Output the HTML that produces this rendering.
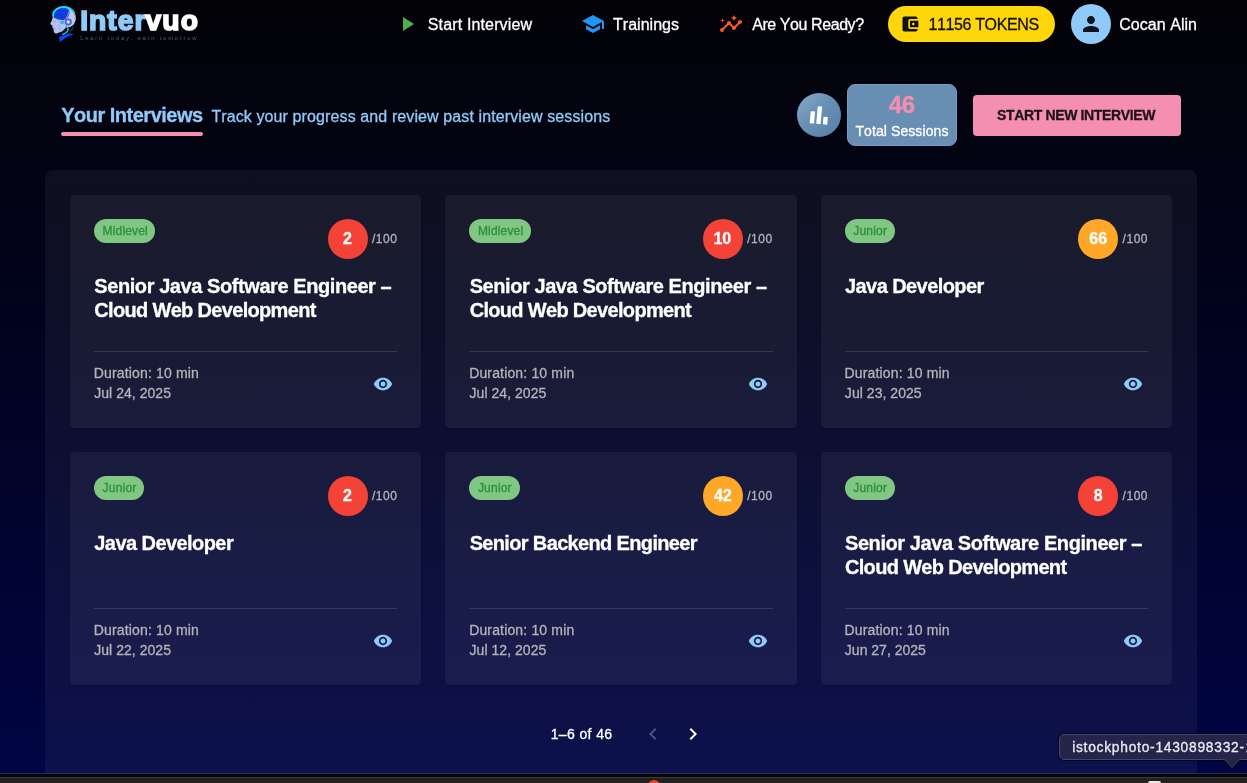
<!DOCTYPE html>
<html lang="en">
<head>
<meta charset="utf-8">
<title>Intervuo – Your Interviews</title>
<style>
*{box-sizing:border-box;margin:0;padding:0}
html,body{width:1247px;height:783px;overflow:hidden}
body{position:relative;font-family:"Liberation Sans",sans-serif;background:linear-gradient(180deg,#020206 0%,#02030c 10%,#010324 52%,#010544 100%);color:#fff}
.t{position:absolute;white-space:nowrap;line-height:1;display:block;font-kerning:none}
.abs{position:absolute}
.txt{position:absolute;left:0;top:0;width:1247px;height:783px;will-change:transform}
.panel{position:absolute;left:45px;top:170px;width:1152px;height:640px;border-radius:8px;background:rgba(255,255,255,0.05)}
.card{position:absolute;height:233px;border-radius:4px;background:rgba(255,255,255,0.05);box-shadow:0 1px 2px rgba(0,0,0,0.25)}
.chip{position:absolute;height:24px;border-radius:12px;background:#81c784}
.score{position:absolute;width:40px;height:40px;border-radius:50%}
.hr{position:absolute;height:1px;background:rgba(255,255,255,0.13)}
.eye{position:absolute}
.pill{position:absolute;left:888px;top:6px;width:167px;height:36px;border-radius:18px;background:#ffd60a}
.avatar{position:absolute;left:1071px;top:4px;width:40px;height:40px;border-radius:50%;background:#90caf9}
.uline{position:absolute;left:61px;top:132px;width:142px;height:4px;border-radius:2px;background:#f48fb1}
.statc{position:absolute;left:797px;top:93px;width:44px;height:44px;border-radius:50%;background:linear-gradient(135deg,#8aaac8 0%,#6890b5 45%,#5780a8 100%)}
.statb{position:absolute;left:847px;top:84px;width:110px;height:62px;border-radius:8px;background:#688fb3;border:1px solid #739cc2}
.btn{position:absolute;left:973px;top:95px;width:208px;height:41px;border-radius:4px;background:#f48fb1}
.dock{position:absolute;left:0;top:773px;width:1247px;height:10px;background:#212121}
.dock .l1{position:absolute;left:0;top:0;width:100%;height:1px;background:#262b5c}
.dock .l2{position:absolute;left:0;top:1px;width:100%;height:3px;background:#060606}
.dock .l3{position:absolute;left:0;top:4px;width:100%;height:1px;background:#3b3b3b}
.tip{position:absolute;left:1059px;top:734px;width:200px;height:26px;border-radius:5px;background:#25254b;border:1px solid #43466e;box-shadow:0 0 0 1px rgba(0,0,0,0.6)}
</style>
</head>
<body>
<!-- header icons -->
<svg class="abs" style="left:395.3px;top:12.3px" width="24" height="24" viewBox="0 0 24 24"><path fill="#4caf50" d="M8 5v14l11-7z"/></svg>
<svg class="abs" style="left:580.7px;top:12.2px" width="24" height="24" viewBox="0 0 24 24"><path fill="#2196f3" d="M5 13.18v4L12 21l7-3.82v-4L12 17zM12 3 1 9l11 6 9-4.91V17h2V9z"/></svg>
<svg class="abs" style="left:719.4px;top:12.4px" width="24" height="24" viewBox="0 0 24 24"><path fill="#ff5722" d="M21 8c-1.45 0-2.26 1.44-1.93 2.51l-3.55 3.56c-.3-.09-.74-.09-1.04 0l-2.55-2.55C12.27 10.45 11.46 9 10 9c-1.45 0-2.27 1.44-1.93 2.52l-4.56 4.55C2.44 15.74 1 16.55 1 18c0 1.1.9 2 2 2 1.45 0 2.26-1.44 1.93-2.51l4.55-4.56c.3.09.74.09 1.04 0l2.55 2.55C12.73 16.55 13.54 18 15 18c1.45 0 2.27-1.44 1.93-2.52l3.56-3.55c1.07.33 2.51-.48 2.51-1.93 0-1.1-.9-2-2-2m-6 1 .94-2.07L18 6l-2.06-.93L15 3l-.92 2.07L12 6l2.08.93zM3.5 11 4 9l2-.5L4 8l-.5-2L3 8l-2 .5L3 9z"/></svg>
<svg class="abs" style="left:44px;top:2px" width="40" height="44" viewBox="0 0 712 783">
<g>
<!-- skull -->
<path d="M160 250 C150 130 270 78 360 80 C470 84 570 160 562 290 C558 380 520 430 450 450 L400 440 L400 300 Z" fill="#bccaf3"/>
<!-- face -->
<path d="M155 268 L140 330 L108 392 L148 420 L150 452 L168 478 L176 540 L212 566 L330 522 L400 445 L410 300 L250 290 Z" fill="#b3c2ee"/>
<!-- face shading lines -->
<path d="M262 300 L285 380 L262 470 L300 520" fill="none" stroke="#8f98e0" stroke-width="9"/>
<path d="M165 340 L215 352" stroke="#7f8ce0" stroke-width="12" fill="none"/>
<path d="M168 462 L205 478" stroke="#7f8ce0" stroke-width="12" fill="none"/>
<!-- neck -->
<path d="M266 622 L455 558 L528 576 L395 632 L283 714 Z" fill="#0d48f2"/>
<path d="M250 580 L330 590 L420 550 L330 540 Z" fill="#060a3a"/>
<!-- brain -->
<path d="M172 262 C160 170 230 108 340 104 C420 102 462 140 452 200 C444 262 400 318 330 322 C260 318 200 300 172 262 Z" fill="#1040e2"/>
<path d="M230 180 C270 150 330 150 380 170 M210 240 C260 215 330 230 400 215 M270 280 C310 265 350 275 390 262" stroke="#0a2fc4" stroke-width="16" fill="none"/>
<!-- strap -->
<path d="M455 150 C440 220 410 270 372 325" stroke="#8c88e2" stroke-width="20" fill="none"/>
<!-- cyan arc -->
<path d="M162 250 C152 140 265 88 355 88 C430 90 500 125 535 195" stroke="#1bdcf7" stroke-width="32" fill="none" stroke-linecap="round"/>
<path d="M535 195 C560 240 566 270 556 330" stroke="#8fa8f2" stroke-width="18" fill="none"/>
<!-- ear -->
<circle cx="432" cy="356" r="62" fill="#5548cc"/>
<circle cx="432" cy="356" r="46" fill="#4a86ee"/>
<circle cx="432" cy="356" r="26" fill="#ece9ff"/>
<circle cx="326" cy="360" r="34" fill="#2cb6e4"/>
<circle cx="326" cy="360" r="15" fill="#8a7ee0"/>
<!-- mic tube -->
<path d="M392 432 C450 462 445 535 335 578" stroke="#1bd2ea" stroke-width="24" fill="none" stroke-linecap="round"/>
<path d="M520 445 C515 480 490 505 465 520" stroke="#0f3d40" stroke-width="22" fill="none" stroke-linecap="round"/>
</g>
</svg>

<div class="pill"></div>
<div class="avatar"></div>
<div class="uline"></div>
<div class="statc"></div>
<div class="statb"></div>
<div class="btn"></div>
<div class="panel"></div>
<div class="card" style="left:70.10px;top:195px;width:351.33px"></div>
<div class="chip" style="left:94.00px;top:219px;width:61.4px"></div>
<div class="score" style="left:327.60px;top:219px;background:#f44336"></div>
<div class="hr" style="left:94.00px;top:351px;width:303.33px"></div>
<svg class="eye" style="left:372.60px;top:374px" width="20" height="20" viewBox="0 0 24 24"><path fill="#90caf9" d="M12 4.5C7 4.5 2.73 7.61 1 12c1.73 4.39 6 7.5 11 7.5s9.27-3.11 11-7.5c-1.73-4.39-6-7.5-11-7.5M12 17c-2.76 0-5-2.24-5-5s2.24-5 5-5 5 2.24 5 5-2.24 5-5 5m0-8c-1.66 0-3 1.34-3 3s1.34 3 3 3 3-1.34 3-3-1.34-3-3-3"/></svg>
<div class="card" style="left:445.43px;top:195px;width:351.33px"></div>
<div class="chip" style="left:469.33px;top:219px;width:61.4px"></div>
<div class="score" style="left:702.93px;top:219px;background:#f44336"></div>
<div class="hr" style="left:469.33px;top:351px;width:303.33px"></div>
<svg class="eye" style="left:747.93px;top:374px" width="20" height="20" viewBox="0 0 24 24"><path fill="#90caf9" d="M12 4.5C7 4.5 2.73 7.61 1 12c1.73 4.39 6 7.5 11 7.5s9.27-3.11 11-7.5c-1.73-4.39-6-7.5-11-7.5M12 17c-2.76 0-5-2.24-5-5s2.24-5 5-5 5 2.24 5 5-2.24 5-5 5m0-8c-1.66 0-3 1.34-3 3s1.34 3 3 3 3-1.34 3-3-1.34-3-3-3"/></svg>
<div class="card" style="left:820.77px;top:195px;width:351.33px"></div>
<div class="chip" style="left:844.67px;top:219px;width:50.3px"></div>
<div class="score" style="left:1078.27px;top:219px;background:#ffa726"></div>
<div class="hr" style="left:844.67px;top:351px;width:303.33px"></div>
<svg class="eye" style="left:1123.27px;top:374px" width="20" height="20" viewBox="0 0 24 24"><path fill="#90caf9" d="M12 4.5C7 4.5 2.73 7.61 1 12c1.73 4.39 6 7.5 11 7.5s9.27-3.11 11-7.5c-1.73-4.39-6-7.5-11-7.5M12 17c-2.76 0-5-2.24-5-5s2.24-5 5-5 5 2.24 5 5-2.24 5-5 5m0-8c-1.66 0-3 1.34-3 3s1.34 3 3 3 3-1.34 3-3-1.34-3-3-3"/></svg>
<div class="card" style="left:70.10px;top:452px;width:351.33px"></div>
<div class="chip" style="left:94.00px;top:476px;width:50.3px"></div>
<div class="score" style="left:327.60px;top:476px;background:#f44336"></div>
<div class="hr" style="left:94.00px;top:608px;width:303.33px"></div>
<svg class="eye" style="left:372.60px;top:631px" width="20" height="20" viewBox="0 0 24 24"><path fill="#90caf9" d="M12 4.5C7 4.5 2.73 7.61 1 12c1.73 4.39 6 7.5 11 7.5s9.27-3.11 11-7.5c-1.73-4.39-6-7.5-11-7.5M12 17c-2.76 0-5-2.24-5-5s2.24-5 5-5 5 2.24 5 5-2.24 5-5 5m0-8c-1.66 0-3 1.34-3 3s1.34 3 3 3 3-1.34 3-3-1.34-3-3-3"/></svg>
<div class="card" style="left:445.43px;top:452px;width:351.33px"></div>
<div class="chip" style="left:469.33px;top:476px;width:50.3px"></div>
<div class="score" style="left:702.93px;top:476px;background:#ffa726"></div>
<div class="hr" style="left:469.33px;top:608px;width:303.33px"></div>
<svg class="eye" style="left:747.93px;top:631px" width="20" height="20" viewBox="0 0 24 24"><path fill="#90caf9" d="M12 4.5C7 4.5 2.73 7.61 1 12c1.73 4.39 6 7.5 11 7.5s9.27-3.11 11-7.5c-1.73-4.39-6-7.5-11-7.5M12 17c-2.76 0-5-2.24-5-5s2.24-5 5-5 5 2.24 5 5-2.24 5-5 5m0-8c-1.66 0-3 1.34-3 3s1.34 3 3 3 3-1.34 3-3-1.34-3-3-3"/></svg>
<div class="card" style="left:820.77px;top:452px;width:351.33px"></div>
<div class="chip" style="left:844.67px;top:476px;width:50.3px"></div>
<div class="score" style="left:1078.27px;top:476px;background:#f44336"></div>
<div class="hr" style="left:844.67px;top:608px;width:303.33px"></div>
<svg class="eye" style="left:1123.27px;top:631px" width="20" height="20" viewBox="0 0 24 24"><path fill="#90caf9" d="M12 4.5C7 4.5 2.73 7.61 1 12c1.73 4.39 6 7.5 11 7.5s9.27-3.11 11-7.5c-1.73-4.39-6-7.5-11-7.5M12 17c-2.76 0-5-2.24-5-5s2.24-5 5-5 5 2.24 5 5-2.24 5-5 5m0-8c-1.66 0-3 1.34-3 3s1.34 3 3 3 3-1.34 3-3-1.34-3-3-3"/></svg>
<div class="tip"></div>
<div class="dock"><div class="l1"></div><div class="l2"></div><div class="l3"></div></div>
<!-- icons that sit on top of shapes -->
<svg class="abs" style="left:899.5px;top:14.1px" width="20" height="20" viewBox="0 0 24 24"><path fill="#111" d="M21 18v1c0 1.1-.9 2-2 2H5c-1.11 0-2-.9-2-2V5c0-1.1.89-2 2-2h14c1.1 0 2 .9 2 2v1h-9c-1.11 0-2 .9-2 2v8c0 1.1.89 2 2 2zm-9-2h10V8H12zm4-2.5c-.83 0-1.5-.67-1.5-1.5s.67-1.5 1.5-1.5 1.5.67 1.5 1.5-.67 1.5-1.5 1.5"/></svg>
<svg class="abs" style="left:1078.8px;top:12.1px" width="24" height="24" viewBox="0 0 24 24"><path fill="#0e1320" d="M12 12c2.21 0 4-1.79 4-4s-1.79-4-4-4-4 1.79-4 4 1.79 4 4 4m0 2c-2.67 0-8 1.34-8 4v2h16v-2c0-2.66-5.33-4-8-4"/></svg>
<svg class="abs" style="left:805.8px;top:101.8px;transform:rotate(5deg)" width="26.4" height="26.4" viewBox="0 0 24 24"><path fill="#fff" d="M4 9h4v11H4zm12 4h4v7h-4zm-6-9h4v16h-4z"/></svg>
<svg class="abs" style="left:641px;top:722.4px" width="24" height="24" viewBox="0 0 24 24"><path fill="#4d5280" d="M15.41 16.59 10.83 12l4.58-4.59L14 6l-6 6 6 6z"/></svg>
<svg class="abs" style="left:681px;top:722.4px" width="24" height="24" viewBox="0 0 24 24"><path fill="#fff" d="M8.59 16.59 13.17 12 8.59 7.41 10 6l6 6-6 6z"/></svg>
<!-- tooltip arrow -->
<svg class="abs" style="left:1222px;top:759px" width="20" height="11" viewBox="0 0 20 11"><path d="M2.2 1.2 L10 9.4 L17.8 1.2" fill="none" stroke="#05050c" stroke-width="2.2" stroke-linejoin="round"/><path d="M2.5 0.8 L10 8.6 L17.5 0.8 Z" fill="#25254b"/><path d="M2.5 0.8 L10 8.6 L17.5 0.8" fill="none" stroke="#43466e" stroke-width="0.9"/><rect x="3.4" y="0" width="13.2" height="1.3" fill="#25254b"/></svg>
<!-- dock bits -->
<div class="abs" style="left:647.5px;top:779.8px;width:12px;height:12px;border-radius:50%;background:#f04438"></div>
<div class="abs" style="left:1148px;top:781.3px;width:13px;height:6px;border-radius:2px;background:#e8e8e8"></div>

<div class="txt">
<span class="t" style="left:427.80px;top:17px;font-size:16px;font-weight:400;color:#fff;letter-spacing:0.143px;-webkit-text-stroke:0.3px #fff;">Start Interview</span>
<span class="t" style="left:613.00px;top:17px;font-size:16px;font-weight:400;color:#fff;letter-spacing:0.024px;-webkit-text-stroke:0.3px #fff;">Trainings</span>
<span class="t" style="left:752.20px;top:17px;font-size:16px;font-weight:400;color:#fff;letter-spacing:-0.424px;-webkit-text-stroke:0.3px #fff;">Are You Ready?</span>
<span class="t" style="left:928.50px;top:17px;font-size:16px;font-weight:400;color:#111;letter-spacing:-0.378px;-webkit-text-stroke:0.3px #111;">11156 TOKENS</span>
<span class="t" style="left:1119.20px;top:17px;font-size:16px;font-weight:400;color:#fff;letter-spacing:0.047px;-webkit-text-stroke:0.3px #fff;">Cocan Alin</span>
<span class="t" style="left:80.25px;top:6px;font-size:28.2px;font-weight:700;color:#90caf9;letter-spacing:1.022px;-webkit-text-stroke:1.7px #90caf9;">Inter</span>
<span class="t" style="left:145.45px;top:6px;font-size:28.2px;font-weight:700;color:#fff;letter-spacing:1.203px;-webkit-text-stroke:1.7px #fff;">vuo</span>
<span class="t" style="left:80.20px;top:36px;font-size:5.8px;font-weight:400;color:#5c5c62;letter-spacing:1.803px;-webkit-text-stroke:0px #5c5c62;">Learn today, earn tomorrow</span>
<span class="t" style="left:61.20px;top:105px;font-size:20px;font-weight:700;color:#90caf9;letter-spacing:-0.501px;-webkit-text-stroke:0.3px #90caf9;">Your Interviews</span>
<span class="t" style="left:211.40px;top:109px;font-size:16px;font-weight:400;color:#90caf9;letter-spacing:0.110px;-webkit-text-stroke:0.3px #90caf9;">Track your progress and review past interview sessions</span>
<span class="t" style="left:888.70px;top:93px;font-size:24px;font-weight:700;color:#f48fb1;letter-spacing:-0.348px;-webkit-text-stroke:0.3px #f48fb1;">46</span>
<span class="t" style="left:855.40px;top:124px;font-size:14px;font-weight:400;color:#fff;letter-spacing:0.091px;-webkit-text-stroke:0.3px #fff;">Total Sessions</span>
<span class="t" style="left:997.00px;top:108px;font-size:14px;font-weight:700;color:#1c1216;letter-spacing:-0.354px;-webkit-text-stroke:0.3px #1c1216;">START NEW INTERVIEW</span>
<span class="t" style="left:102.60px;top:225px;font-size:12px;font-weight:400;color:#2f8f37;letter-spacing:0.164px;-webkit-text-stroke:0.35px #2f8f37;">Midlevel</span>
<span class="t" style="left:343.10px;top:231px;font-size:16px;font-weight:700;color:#fff;letter-spacing:0.000px;-webkit-text-stroke:0.3px #fff;">2</span>
<span class="t" style="left:371.90px;top:233px;font-size:12px;font-weight:400;color:#b4b4bb;letter-spacing:0.539px;-webkit-text-stroke:0.3px #b4b4bb;">/100</span>
<span class="t" style="left:94.30px;top:276px;font-size:20px;font-weight:700;color:#fff;letter-spacing:-0.423px;-webkit-text-stroke:0.3px #fff;">Senior Java Software Engineer –</span>
<span class="t" style="left:94.30px;top:300px;font-size:20px;font-weight:700;color:#fff;letter-spacing:-0.675px;-webkit-text-stroke:0.3px #fff;">Cloud Web Development</span>
<span class="t" style="left:93.80px;top:366px;font-size:14px;font-weight:400;color:#b4b4ba;letter-spacing:0.158px;-webkit-text-stroke:0.3px #b4b4ba;">Duration: 10 min</span>
<span class="t" style="left:94.20px;top:386px;font-size:14px;font-weight:400;color:#b4b4ba;letter-spacing:0.046px;-webkit-text-stroke:0.3px #b4b4ba;">Jul 24, 2025</span>
<span class="t" style="left:477.93px;top:225px;font-size:12px;font-weight:400;color:#2f8f37;letter-spacing:0.164px;-webkit-text-stroke:0.35px #2f8f37;">Midlevel</span>
<span class="t" style="left:713.48px;top:231px;font-size:16px;font-weight:700;color:#fff;letter-spacing:0.000px;-webkit-text-stroke:0.3px #fff;">10</span>
<span class="t" style="left:747.23px;top:233px;font-size:12px;font-weight:400;color:#b4b4bb;letter-spacing:0.539px;-webkit-text-stroke:0.3px #b4b4bb;">/100</span>
<span class="t" style="left:469.63px;top:276px;font-size:20px;font-weight:700;color:#fff;letter-spacing:-0.423px;-webkit-text-stroke:0.3px #fff;">Senior Java Software Engineer –</span>
<span class="t" style="left:469.63px;top:300px;font-size:20px;font-weight:700;color:#fff;letter-spacing:-0.675px;-webkit-text-stroke:0.3px #fff;">Cloud Web Development</span>
<span class="t" style="left:469.13px;top:366px;font-size:14px;font-weight:400;color:#b4b4ba;letter-spacing:0.158px;-webkit-text-stroke:0.3px #b4b4ba;">Duration: 10 min</span>
<span class="t" style="left:469.53px;top:386px;font-size:14px;font-weight:400;color:#b4b4ba;letter-spacing:0.046px;-webkit-text-stroke:0.3px #b4b4ba;">Jul 24, 2025</span>
<span class="t" style="left:853.27px;top:225px;font-size:12px;font-weight:400;color:#2f8f37;letter-spacing:0.202px;-webkit-text-stroke:0.35px #2f8f37;">Junior</span>
<span class="t" style="left:1089.32px;top:231px;font-size:16px;font-weight:700;color:#fff;letter-spacing:0.000px;-webkit-text-stroke:0.3px #fff;">66</span>
<span class="t" style="left:1122.57px;top:233px;font-size:12px;font-weight:400;color:#b4b4bb;letter-spacing:0.539px;-webkit-text-stroke:0.3px #b4b4bb;">/100</span>
<span class="t" style="left:844.97px;top:276px;font-size:20px;font-weight:700;color:#fff;letter-spacing:-0.567px;-webkit-text-stroke:0.3px #fff;">Java Developer</span>
<span class="t" style="left:844.47px;top:366px;font-size:14px;font-weight:400;color:#b4b4ba;letter-spacing:0.158px;-webkit-text-stroke:0.3px #b4b4ba;">Duration: 10 min</span>
<span class="t" style="left:844.87px;top:386px;font-size:14px;font-weight:400;color:#b4b4ba;letter-spacing:0.046px;-webkit-text-stroke:0.3px #b4b4ba;">Jul 23, 2025</span>
<span class="t" style="left:102.60px;top:482px;font-size:12px;font-weight:400;color:#2f8f37;letter-spacing:0.203px;-webkit-text-stroke:0.35px #2f8f37;">Junior</span>
<span class="t" style="left:343.10px;top:488px;font-size:16px;font-weight:700;color:#fff;letter-spacing:0.000px;-webkit-text-stroke:0.3px #fff;">2</span>
<span class="t" style="left:371.90px;top:490px;font-size:12px;font-weight:400;color:#b4b4bb;letter-spacing:0.539px;-webkit-text-stroke:0.3px #b4b4bb;">/100</span>
<span class="t" style="left:94.30px;top:533px;font-size:20px;font-weight:700;color:#fff;letter-spacing:-0.567px;-webkit-text-stroke:0.3px #fff;">Java Developer</span>
<span class="t" style="left:93.80px;top:623px;font-size:14px;font-weight:400;color:#b4b4ba;letter-spacing:0.158px;-webkit-text-stroke:0.3px #b4b4ba;">Duration: 10 min</span>
<span class="t" style="left:94.20px;top:643px;font-size:14px;font-weight:400;color:#b4b4ba;letter-spacing:0.046px;-webkit-text-stroke:0.3px #b4b4ba;">Jul 22, 2025</span>
<span class="t" style="left:477.93px;top:482px;font-size:12px;font-weight:400;color:#2f8f37;letter-spacing:0.202px;-webkit-text-stroke:0.35px #2f8f37;">Junior</span>
<span class="t" style="left:713.98px;top:488px;font-size:16px;font-weight:700;color:#fff;letter-spacing:0.000px;-webkit-text-stroke:0.3px #fff;">42</span>
<span class="t" style="left:747.23px;top:490px;font-size:12px;font-weight:400;color:#b4b4bb;letter-spacing:0.539px;-webkit-text-stroke:0.3px #b4b4bb;">/100</span>
<span class="t" style="left:469.63px;top:533px;font-size:20px;font-weight:700;color:#fff;letter-spacing:-0.651px;-webkit-text-stroke:0.3px #fff;">Senior Backend Engineer</span>
<span class="t" style="left:469.13px;top:623px;font-size:14px;font-weight:400;color:#b4b4ba;letter-spacing:0.158px;-webkit-text-stroke:0.3px #b4b4ba;">Duration: 10 min</span>
<span class="t" style="left:469.53px;top:643px;font-size:14px;font-weight:400;color:#b4b4ba;letter-spacing:0.046px;-webkit-text-stroke:0.3px #b4b4ba;">Jul 12, 2025</span>
<span class="t" style="left:853.27px;top:482px;font-size:12px;font-weight:400;color:#2f8f37;letter-spacing:0.202px;-webkit-text-stroke:0.35px #2f8f37;">Junior</span>
<span class="t" style="left:1093.77px;top:488px;font-size:16px;font-weight:700;color:#fff;letter-spacing:0.000px;-webkit-text-stroke:0.3px #fff;">8</span>
<span class="t" style="left:1122.57px;top:490px;font-size:12px;font-weight:400;color:#b4b4bb;letter-spacing:0.539px;-webkit-text-stroke:0.3px #b4b4bb;">/100</span>
<span class="t" style="left:844.97px;top:533px;font-size:20px;font-weight:700;color:#fff;letter-spacing:-0.423px;-webkit-text-stroke:0.3px #fff;">Senior Java Software Engineer –</span>
<span class="t" style="left:844.97px;top:557px;font-size:20px;font-weight:700;color:#fff;letter-spacing:-0.675px;-webkit-text-stroke:0.3px #fff;">Cloud Web Development</span>
<span class="t" style="left:844.47px;top:623px;font-size:14px;font-weight:400;color:#b4b4ba;letter-spacing:0.158px;-webkit-text-stroke:0.3px #b4b4ba;">Duration: 10 min</span>
<span class="t" style="left:844.87px;top:643px;font-size:14px;font-weight:400;color:#b4b4ba;letter-spacing:0.003px;-webkit-text-stroke:0.3px #b4b4ba;">Jun 27, 2025</span>
<span class="t" style="left:550.70px;top:727px;font-size:14px;font-weight:400;color:#fff;letter-spacing:0.375px;-webkit-text-stroke:0.3px #fff;">1–6 of 46</span>
<span class="t" style="left:1072.20px;top:741px;font-size:13.8px;font-weight:400;color:#eceaf2;letter-spacing:0.735px;-webkit-text-stroke:0.3px #eceaf2;">istockphoto-1430898332-</span>
<span class="t" style="left:1245.60px;top:741px;font-size:13.8px;font-weight:400;color:#eceaf2;letter-spacing:-2.600px;-webkit-text-stroke:0.3px #eceaf2;">1</span>
</div>
</body>
</html>
